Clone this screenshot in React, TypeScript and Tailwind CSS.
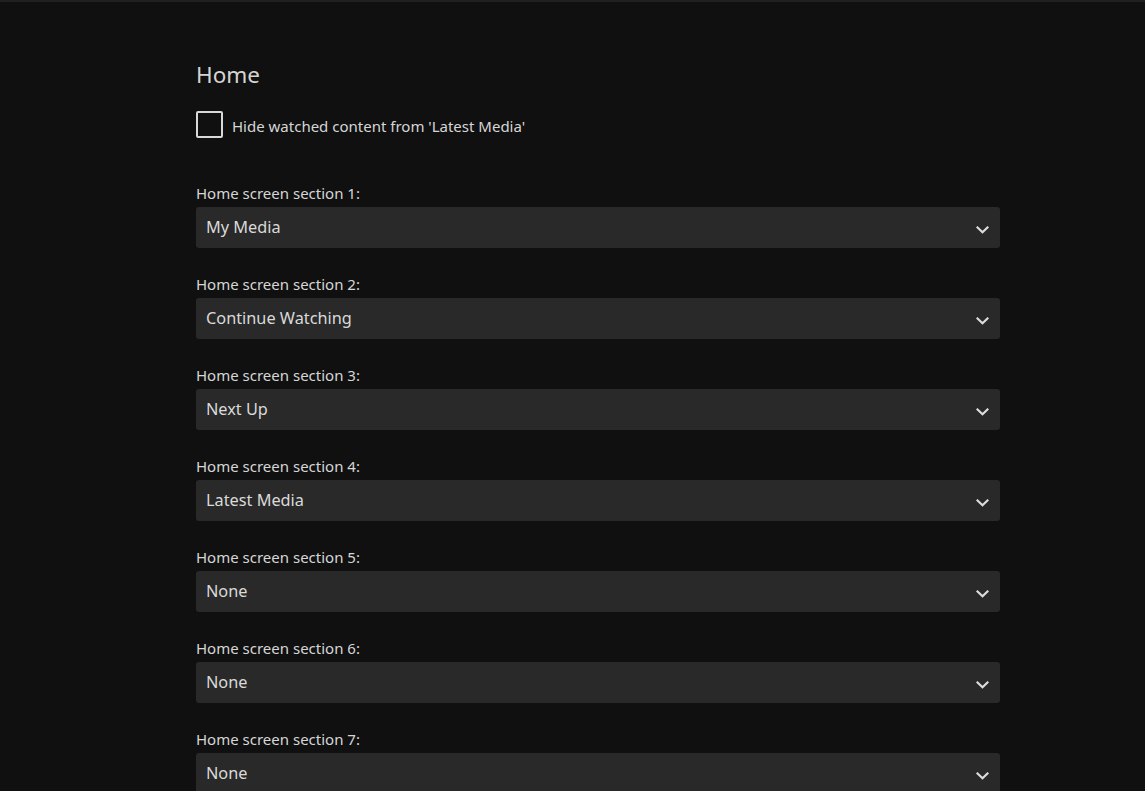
import React from "react";

const sections = [
  "My Media",
  "Continue Watching",
  "Next Up",
  "Latest Media",
  "None",
  "None",
  "None",
];

const Chevron: React.FC = () => (
  <svg width="13" height="8" viewBox="0 0 13 8" fill="none" className="mt-[4px] shrink-0">
    <path d="M1.5 1.5 L6.5 6.3 L11.5 1.5" stroke="#dcdcdc" strokeWidth="2.2" strokeLinecap="square" />
  </svg>
);

const SectionSelect: React.FC<{ index: number; value: string }> = ({ index, value }) => (
  <div className="flex flex-col">
    <label className="h-[22px] text-[15px] leading-[22px] text-[#d6d6d6]">
      Home screen section {index}:
    </label>
    <div className="mt-[3px] mb-[25px] flex h-[41px] items-center justify-between rounded-[3px] bg-[#292929] pl-[10px] pr-[11px]">
      <span className="text-[16.3px] text-[#dadada]">{value}</span>
      <Chevron />
    </div>
  </div>
);

export default function App() {
  return (
    <div
      className="h-[791px] overflow-hidden bg-[#101010]"
      style={{ fontFamily: '"Noto Sans", "Open Sans", sans-serif' }}
    >
      <div className="h-[2px] bg-[#202020]" />
      <div className="pl-[196px] pt-[58px]">
        <div className="w-[804px]">
          <h2 className="h-[30px] text-[22.5px] leading-[30px] font-normal text-[#d4d4d4]">Home</h2>
          <label className="mt-[21px] flex items-center gap-[9px]">
            <span className="h-[27px] w-[27px] rounded-[2px] border-2 border-[#d8d8d8]" />
            <span className="pt-[3px] text-[15px] text-[#d6d6d6]">Hide watched content from 'Latest Media'</span>
          </label>
          <div className="mt-[44px] flex flex-col">
            {sections.map((s, i) => (
              <SectionSelect key={i} index={i + 1} value={s} />
            ))}
          </div>
        </div>
      </div>
    </div>
  );
}
